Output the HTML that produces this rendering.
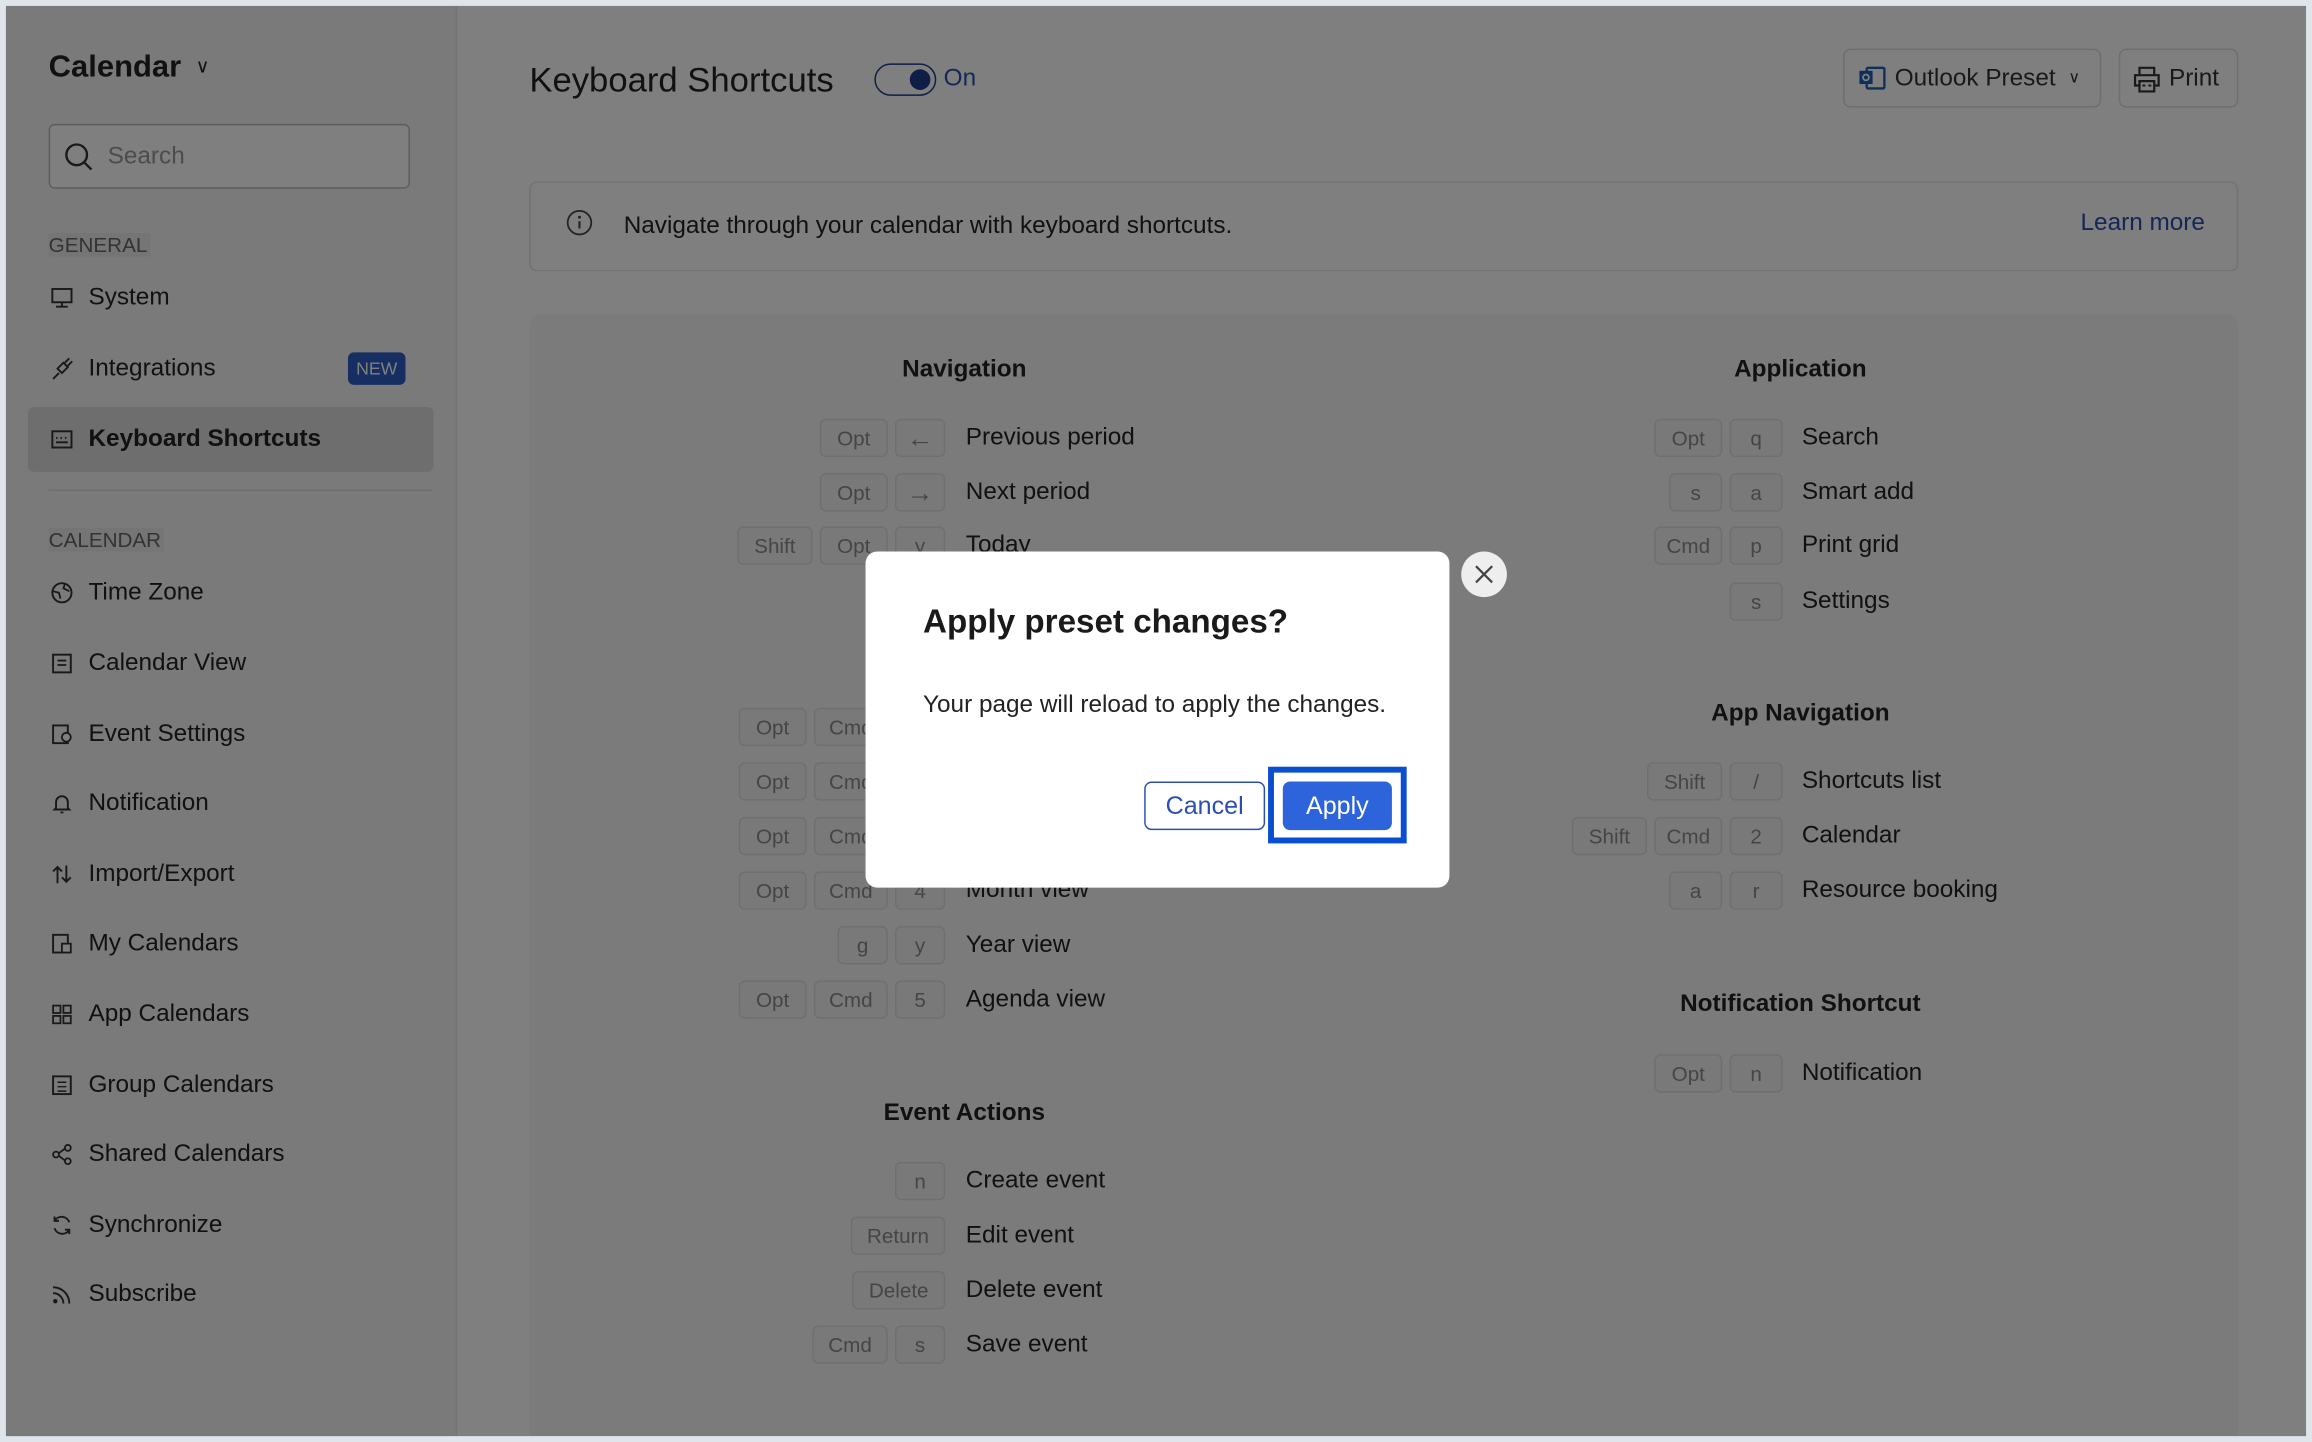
<!DOCTYPE html>
<html><head><meta charset="utf-8"><style>
*{box-sizing:border-box;margin:0;padding:0}
html,body{width:2312px;height:1442px;overflow:hidden;background:#dfe5ea;font-family:"Liberation Sans",sans-serif}
#s{position:absolute;left:0;top:0;width:1568px;height:978px;transform:scale(1.47449);transform-origin:0 0}
.frame{position:absolute;left:4px;top:4px;width:1560px;height:970px;background:#fff;overflow:hidden}
.side{position:absolute;left:0;top:0;width:306px;height:970px;background:#f4f4f4;border-right:1px solid #e6e6e6}
.a{position:absolute;white-space:nowrap}
.it{position:absolute;left:56px;font-size:16.5px;color:#222;transform:translateY(-50%)}
.ic{position:absolute;left:30px;width:16px;height:16px;transform:translateY(-50%)}
.k{position:absolute;height:26px;background:#f3f3f3;border:1px solid #dedede;border-radius:4px;color:#8a8a8a;font-size:14px;text-align:center;line-height:24px}
.l{position:absolute;font-size:16.5px;color:#222;transform:translateY(-50%);white-space:nowrap}
.h{position:absolute;font-size:16.5px;font-weight:bold;color:#222;transform:translate(-50%,-50%);white-space:nowrap}
.ov{position:absolute;left:4px;top:4px;width:1560px;height:970px;background:rgba(0,0,0,0.5)}
</style></head><body><div id="s">
<div class="frame">
 <div class="side">
  <div class="a" style="left:29px;top:30px;font-size:21px;font-weight:bold;color:#222">Calendar <span style="font-size:13px;font-weight:normal;margin-left:4px;vertical-align:3px">&#8744;</span></div>
  <div class="a" style="left:29px;top:80px;width:245px;height:44px;border:1px solid #bbb;border-radius:4px;background:#fff"></div>
  <svg class="a" style="left:39px;top:92px" width="22" height="22" viewBox="0 0 22 22"><circle cx="9" cy="9" r="7" fill="none" stroke="#333" stroke-width="1.6"/><path d="M14 14l5 5" stroke="#333" stroke-width="1.6"/></svg>
  <div class="a" style="left:69px;top:93px;font-size:16.5px;color:#999">Search</div>
  <div class="a" style="left:29px;top:154px;font-size:14px;color:#666;background:#eaeaea;padding:0 2px 0 0">GENERAL</div>
  <div class="a" style="left:15px;top:272px;width:275px;height:44px;background:#dcdcdc;border-radius:4px"></div>
  <div class="a" style="left:232px;top:235px;width:39px;height:22px;background:#2f5cc4;color:#fff;font-size:12px;border-radius:4px;text-align:center;line-height:22px">NEW</div>
  <div class="a" style="left:29px;top:328px;width:260px;border-top:1px solid #ddd"></div>
  <div class="a" style="left:29px;top:354px;font-size:14px;color:#666;background:#eaeaea;padding:0 2px 0 0">CALENDAR</div>
  <svg class="ic" style="top:198px" viewBox="0 0 16 16"><rect x="1.5" y="2" width="13" height="9" fill="none" stroke="#333" stroke-width="1.3"/><path d="M8 11v3M4 14h8" stroke="#333" stroke-width="1.3"/></svg>
  <div class="it" style="top:198px">System</div>
  <svg class="ic" style="top:246px" viewBox="0 0 16 16"><path d="M2 15l4-4M5 8l3 3 4-4-3-3zM10 4l3-3M12 6l3-3" fill="none" stroke="#333" stroke-width="1.3"/></svg>
  <div class="it" style="top:246px">Integrations</div>
  <svg class="ic" style="top:294px" viewBox="0 0 16 16"><rect x="1.5" y="2.5" width="13" height="11" fill="none" stroke="#333" stroke-width="1.3"/><path d="M4 10h8M4 7h1M7 7h1M10 7h1" stroke="#333" stroke-width="1.3"/></svg>
  <div class="it" style="top:294px;font-weight:bold">Keyboard Shortcuts</div>
  <svg class="ic" style="top:398px" viewBox="0 0 16 16"><circle cx="8" cy="8" r="6.5" fill="none" stroke="#333" stroke-width="1.3"/><path d="M2 7l4 1 1 4M10 2l-1 3 4 2" fill="none" stroke="#333" stroke-width="1.2"/></svg>
  <div class="it" style="top:398px">Time Zone</div>
  <svg class="ic" style="top:446px" viewBox="0 0 16 16"><rect x="2" y="2" width="12" height="12" fill="none" stroke="#333" stroke-width="1.3"/><path d="M5 6h6M5 9h6" stroke="#333" stroke-width="1.2"/></svg>
  <div class="it" style="top:446px">Calendar View</div>
  <svg class="ic" style="top:494px" viewBox="0 0 16 16"><rect x="2" y="2" width="10" height="12" fill="none" stroke="#333" stroke-width="1.3"/><circle cx="11" cy="10" r="3" fill="#fff" stroke="#333" stroke-width="1.2"/></svg>
  <div class="it" style="top:494px">Event Settings</div>
  <svg class="ic" style="top:541px" viewBox="0 0 16 16"><path d="M4 11V7a4 4 0 018 0v4l1 1H3zM7 14h2" fill="none" stroke="#333" stroke-width="1.3"/></svg>
  <div class="it" style="top:541px">Notification</div>
  <svg class="ic" style="top:589px" viewBox="0 0 16 16"><path d="M5 14V3M2 6l3-3 3 3M11 2v11M8 10l3 3 3-3" fill="none" stroke="#333" stroke-width="1.3"/></svg>
  <div class="it" style="top:589px">Import/Export</div>
  <svg class="ic" style="top:636px" viewBox="0 0 16 16"><rect x="2" y="2" width="10" height="12" fill="none" stroke="#333" stroke-width="1.3"/><rect x="8" y="8" width="6" height="6" fill="#fff" stroke="#333" stroke-width="1.2"/></svg>
  <div class="it" style="top:636px">My Calendars</div>
  <svg class="ic" style="top:684px" viewBox="0 0 16 16"><rect x="2" y="2" width="5" height="5" fill="none" stroke="#333" stroke-width="1.2"/><rect x="9" y="2" width="5" height="5" fill="none" stroke="#333" stroke-width="1.2"/><rect x="2" y="9" width="5" height="5" fill="none" stroke="#333" stroke-width="1.2"/><rect x="9" y="9" width="5" height="5" fill="none" stroke="#333" stroke-width="1.2"/></svg>
  <div class="it" style="top:684px">App Calendars</div>
  <svg class="ic" style="top:732px" viewBox="0 0 16 16"><rect x="2" y="2" width="12" height="12" fill="none" stroke="#333" stroke-width="1.3"/><path d="M5 6h6M5 9h6M5 12h6" stroke="#333" stroke-width="1"/></svg>
  <div class="it" style="top:732px">Group Calendars</div>
  <svg class="ic" style="top:779px" viewBox="0 0 16 16"><circle cx="4" cy="8" r="2" fill="none" stroke="#333" stroke-width="1.2"/><circle cx="12" cy="3.5" r="2" fill="none" stroke="#333" stroke-width="1.2"/><circle cx="12" cy="12.5" r="2" fill="none" stroke="#333" stroke-width="1.2"/><path d="M6 7l4-3M6 9l4 3" stroke="#333" stroke-width="1.2"/></svg>
  <div class="it" style="top:779px">Shared Calendars</div>
  <svg class="ic" style="top:827px" viewBox="0 0 16 16"><path d="M13 6a5.5 5.5 0 00-10-1M3 10a5.5 5.5 0 0010 1M3 2v3h3M13 14v-3h-3" fill="none" stroke="#333" stroke-width="1.3"/></svg>
  <div class="it" style="top:827px">Synchronize</div>
  <svg class="ic" style="top:874px" viewBox="0 0 16 16"><circle cx="3.5" cy="12.5" r="1.5" fill="#333"/><path d="M2 7a7 7 0 017 7M2 3a11 11 0 0111 11" fill="none" stroke="#333" stroke-width="1.3"/></svg>
  <div class="it" style="top:874px">Subscribe</div>
 </div>

 <div class="a" style="left:355px;top:37px;font-size:23.5px;color:#222">Keyboard Shortcuts</div>
 <div class="a" style="left:589px;top:39px;width:42px;height:22px;border:1.5px solid #1d3d8f;border-radius:11px;background:#fff"></div>
 <div class="a" style="left:613px;top:43px;width:14px;height:14px;border-radius:50%;background:#1d3d8f"></div>
 <div class="a" style="left:636px;top:40px;font-size:16.5px;color:#2a4fb0">On</div>
 <div class="a" style="left:1246px;top:29px;width:175px;height:40px;border:1px solid #ddd;border-radius:5px"></div>
 <svg class="a" style="left:1257px;top:41px" width="18" height="16" viewBox="0 0 18 16"><rect x="5" y="1" width="12" height="14" rx="1" fill="none" stroke="#1d5fb0" stroke-width="1.6"/><rect x="0" y="3" width="9" height="9" fill="#1d5fb0"/><circle cx="4.5" cy="7.5" r="2" fill="none" stroke="#fff" stroke-width="1.2"/></svg>
 <div class="a" style="left:1281px;top:40px;font-size:16.5px;color:#333">Outlook Preset <span style="font-size:11px;margin-left:4px;vertical-align:2px">&#8744;</span></div>
 <div class="a" style="left:1433px;top:29px;width:81px;height:40px;border:1px solid #ddd;border-radius:5px"></div>
 <svg class="a" style="left:1442px;top:40px" width="20" height="20" viewBox="0 0 20 20"><path d="M5 7V2h10v5M5 14H2V7h16v7h-3M5 11h10v7H5z" fill="none" stroke="#333" stroke-width="1.5"/><path d="M7 14h2M11 14h2" stroke="#333" stroke-width="1.3"/></svg>
 <div class="a" style="left:1467px;top:40px;font-size:16.5px;color:#333">Print</div>

 <div class="a" style="left:355px;top:119px;width:1159px;height:61px;border:1px solid #e4e4e4;border-radius:5px"></div>
 <svg class="a" style="left:380px;top:138px" width="18" height="18" viewBox="0 0 18 18"><circle cx="9" cy="9" r="8" fill="none" stroke="#444" stroke-width="1.2"/><path d="M9 8v5" stroke="#444" stroke-width="1.4"/><circle cx="9" cy="5.3" r="1" fill="#444"/></svg>
 <div class="a" style="left:419px;top:140px;font-size:16.5px;color:#222">Navigate through your calendar with keyboard shortcuts.</div>
 <div class="a" style="left:1407px;top:138px;font-size:16.5px;color:#2a4fb0">Learn more</div>

 <div class="a" style="left:355px;top:209px;width:1159px;height:780px;background:#f6f6f6;border-radius:8px"></div>
 <div id="kb"></div>
</div>
<div class="ov"></div>
<div class="a" style="left:587px;top:374px;width:396px;height:228px;background:#fff;border-radius:8px"></div>
<div class="a" style="left:991px;top:374px;width:31px;height:31px;border-radius:50%;background:#eee"></div>
<svg class="a" style="left:999px;top:382px" width="15" height="15" viewBox="0 0 15 15"><path d="M2 2l11 11M13 2L2 13" stroke="#444" stroke-width="1.5"/></svg>
<div class="a" style="left:626px;top:409px;font-size:22.5px;font-weight:bold;color:#1a1a1a">Apply preset changes?</div>
<div class="a" style="left:626px;top:469px;font-size:16.5px;color:#222">Your page will reload to apply the changes.</div>
<div class="a" style="left:776px;top:530px;width:82px;height:33px;border:1px solid #2a4fb0;border-radius:5px;color:#2a4fb0;font-size:17px;text-align:center;line-height:31px">Cancel</div>
<div class="a" style="left:860px;top:520px;width:94px;height:52px;border:4px solid #0a4fd0"></div>
<div class="a" style="left:870px;top:530px;width:74px;height:33px;background:#2d64dc;border-radius:5px;color:#fff;font-size:17px;text-align:center;line-height:33px">Apply</div>
</div>
<script>
var kb=document.getElementById('kb'),h='';
function row(y,keys,R,L,label){var x=R;var parts=[];for(var i=keys.length-1;i>=0;i--){var w=keys[i][1];x-=w;var st=keys[i][2]||'';parts.push('<div class="k" style="left:'+(x-4)+'px;top:'+(y-17)+'px;width:'+w+'px;'+st+'">'+keys[i][0]+'</div>');x-=5;}
h+=parts.join('')+'<div class="l" style="left:'+(L-4)+'px;top:'+(y-4)+'px">'+label+'</div>';}
function hd(x,y,t){h+='<div class="h" style="left:'+(x-4)+'px;top:'+(y-4)+'px">'+t+'</div>';}
var O=['Opt',46],C=['Cmd',46],S=['Shift',51];function k(c){return [c,34]}
var LA=['&larr;',34,'font-size:18px'],RA=['&rarr;',34,'font-size:18px'];
hd(654,251,'Navigation');hd(1221,251,'Application');hd(654,755,'Event Actions');hd(1221,484,'App Navigation');hd(1221,681,'Notification Shortcut');
row(297,[O,LA],641,655,'Previous period');
row(334,[O,RA],641,655,'Next period');
row(370,[S,O,k('y')],641,655,'Today');
row(407,[k('t')],641,655,'Go to date');
row(444,[k('d')],641,655,'Day view');
row(493,[O,['Cmd',50],k('1')],641,655,'Day view');
row(530,[O,['Cmd',50],k('2')],641,655,'Week view');
row(567,[O,['Cmd',50],k('3')],641,655,'Work week view');
row(604,[O,['Cmd',50],k('4')],641,655,'Month view');
row(641,[k('g'),k('y')],641,655,'Year view');
row(678,[O,['Cmd',50],k('5')],641,655,'Agenda view');
row(801,[k('n')],641,655,'Create event');
row(838,[['Return',64]],641,655,'Edit event');
row(875,[['Delete',63]],641,655,'Delete event');
row(912,[['Cmd',51],k('s')],641,655,'Save event');
var K=function(c){return [c,36]};
row(297,[O,K('q')],1209,1222,'Search');
row(334,[K('s'),K('a')],1209,1222,'Smart add');
row(370,[C,K('p')],1209,1222,'Print grid');
row(408,[K('s')],1209,1222,'Settings');
row(530,[S,K('/')],1209,1222,'Shortcuts list');
row(567,[S,C,K('2')],1209,1222,'Calendar');
row(604,[K('a'),K('r')],1209,1222,'Resource booking');
row(728,[O,K('n')],1209,1222,'Notification');
kb.outerHTML=h;
</script>
</body></html>
